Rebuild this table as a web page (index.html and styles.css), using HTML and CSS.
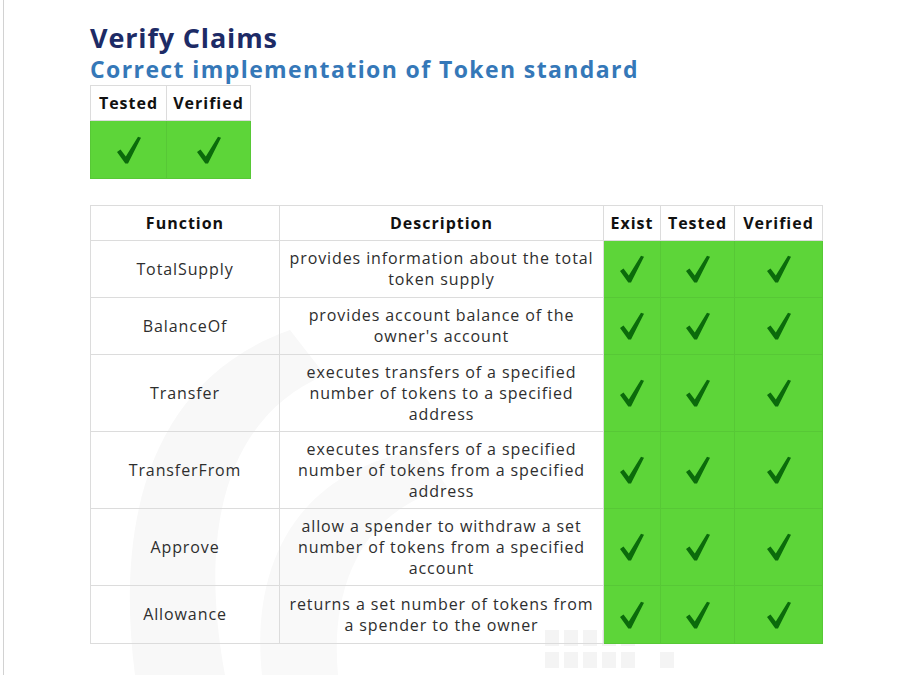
FILE: index.html
```html
<!DOCTYPE html>
<html>
<head>
<meta charset="utf-8">
<link rel="stylesheet" href="styles.css">
</head>
<body>
<div class="page">
  <svg class="watermark" width="913" height="675" viewBox="0 0 913 675">
    <path d="M135 675 C115 520 150 380 290 330 L325 375 C220 420 200 540 225 675 Z" fill="#f8f8f8"/>
    <path d="M262 675 C250 560 300 470 420 450 L448 488 C360 510 330 590 338 675 Z" fill="#f9f9f9"/>
    <g fill="#f4f4f4">
      <rect x="545" y="630" width="14" height="16"/><rect x="564" y="630" width="14" height="16"/><rect x="583" y="630" width="14" height="16"/><rect x="602" y="630" width="14" height="16"/><rect x="621" y="630" width="14" height="16"/>
      <rect x="545" y="652" width="14" height="16"/><rect x="564" y="652" width="14" height="16"/><rect x="583" y="652" width="14" height="16"/><rect x="602" y="652" width="14" height="16"/><rect x="621" y="652" width="14" height="16"/><rect x="660" y="652" width="14" height="16"/>
    </g>
  </svg>
  <div class="content">
    <h1 class="title">Verify Claims</h1>
    <h2 class="subtitle">Correct implementation of Token standard</h2>

    <table class="grid small">
      <colgroup><col class="c-st"><col class="c-sv"></colgroup>
      <tr class="head"><th>Tested</th><th>Verified</th></tr>
      <tr class="chk-row">
        <td class="ok"><svg class="chk" viewBox="0 0 24 28"><path d="M0 16 L3.5 13.5 L8.8 20.5 L21 0.8 L24 1.8 L11 27.5 L8.3 27.5 Z"/></svg></td>
        <td class="ok"><svg class="chk" viewBox="0 0 24 28"><path d="M0 16 L3.5 13.5 L8.8 20.5 L21 0.8 L24 1.8 L11 27.5 L8.3 27.5 Z"/></svg></td>
      </tr>
    </table>

    <table class="grid main">
      <colgroup><col class="c-fn"><col class="c-desc"><col class="c-ex"><col class="c-te"><col class="c-ve"></colgroup>
      <tr class="head"><th>Function</th><th>Description</th><th>Exist</th><th>Tested</th><th>Verified</th></tr>
      <tr class="r2"><td>TotalSupply</td><td>provides information about the total token supply</td>
        <td class="ok"><svg class="chk" viewBox="0 0 24 28"><path d="M0 16 L3.5 13.5 L8.8 20.5 L21 0.8 L24 1.8 L11 27.5 L8.3 27.5 Z"/></svg></td>
        <td class="ok"><svg class="chk" viewBox="0 0 24 28"><path d="M0 16 L3.5 13.5 L8.8 20.5 L21 0.8 L24 1.8 L11 27.5 L8.3 27.5 Z"/></svg></td>
        <td class="ok"><svg class="chk" viewBox="0 0 24 28"><path d="M0 16 L3.5 13.5 L8.8 20.5 L21 0.8 L24 1.8 L11 27.5 L8.3 27.5 Z"/></svg></td></tr>
      <tr class="r2"><td>BalanceOf</td><td>provides account balance of the owner's account</td>
        <td class="ok"><svg class="chk" viewBox="0 0 24 28"><path d="M0 16 L3.5 13.5 L8.8 20.5 L21 0.8 L24 1.8 L11 27.5 L8.3 27.5 Z"/></svg></td>
        <td class="ok"><svg class="chk" viewBox="0 0 24 28"><path d="M0 16 L3.5 13.5 L8.8 20.5 L21 0.8 L24 1.8 L11 27.5 L8.3 27.5 Z"/></svg></td>
        <td class="ok"><svg class="chk" viewBox="0 0 24 28"><path d="M0 16 L3.5 13.5 L8.8 20.5 L21 0.8 L24 1.8 L11 27.5 L8.3 27.5 Z"/></svg></td></tr>
      <tr class="r3"><td>Transfer</td><td>executes transfers of a specified number of tokens to a specified address</td>
        <td class="ok"><svg class="chk" viewBox="0 0 24 28"><path d="M0 16 L3.5 13.5 L8.8 20.5 L21 0.8 L24 1.8 L11 27.5 L8.3 27.5 Z"/></svg></td>
        <td class="ok"><svg class="chk" viewBox="0 0 24 28"><path d="M0 16 L3.5 13.5 L8.8 20.5 L21 0.8 L24 1.8 L11 27.5 L8.3 27.5 Z"/></svg></td>
        <td class="ok"><svg class="chk" viewBox="0 0 24 28"><path d="M0 16 L3.5 13.5 L8.8 20.5 L21 0.8 L24 1.8 L11 27.5 L8.3 27.5 Z"/></svg></td></tr>
      <tr class="r3"><td>TransferFrom</td><td>executes transfers of a specified number of tokens from a specified address</td>
        <td class="ok"><svg class="chk" viewBox="0 0 24 28"><path d="M0 16 L3.5 13.5 L8.8 20.5 L21 0.8 L24 1.8 L11 27.5 L8.3 27.5 Z"/></svg></td>
        <td class="ok"><svg class="chk" viewBox="0 0 24 28"><path d="M0 16 L3.5 13.5 L8.8 20.5 L21 0.8 L24 1.8 L11 27.5 L8.3 27.5 Z"/></svg></td>
        <td class="ok"><svg class="chk" viewBox="0 0 24 28"><path d="M0 16 L3.5 13.5 L8.8 20.5 L21 0.8 L24 1.8 L11 27.5 L8.3 27.5 Z"/></svg></td></tr>
      <tr class="r3"><td>Approve</td><td>allow a spender to withdraw a set number of tokens from a specified account</td>
        <td class="ok"><svg class="chk" viewBox="0 0 24 28"><path d="M0 16 L3.5 13.5 L8.8 20.5 L21 0.8 L24 1.8 L11 27.5 L8.3 27.5 Z"/></svg></td>
        <td class="ok"><svg class="chk" viewBox="0 0 24 28"><path d="M0 16 L3.5 13.5 L8.8 20.5 L21 0.8 L24 1.8 L11 27.5 L8.3 27.5 Z"/></svg></td>
        <td class="ok"><svg class="chk" viewBox="0 0 24 28"><path d="M0 16 L3.5 13.5 L8.8 20.5 L21 0.8 L24 1.8 L11 27.5 L8.3 27.5 Z"/></svg></td></tr>
      <tr class="r2 last"><td>Allowance</td><td>returns a set number of tokens from a spender to the owner</td>
        <td class="ok"><svg class="chk" viewBox="0 0 24 28"><path d="M0 16 L3.5 13.5 L8.8 20.5 L21 0.8 L24 1.8 L11 27.5 L8.3 27.5 Z"/></svg></td>
        <td class="ok"><svg class="chk" viewBox="0 0 24 28"><path d="M0 16 L3.5 13.5 L8.8 20.5 L21 0.8 L24 1.8 L11 27.5 L8.3 27.5 Z"/></svg></td>
        <td class="ok"><svg class="chk" viewBox="0 0 24 28"><path d="M0 16 L3.5 13.5 L8.8 20.5 L21 0.8 L24 1.8 L11 27.5 L8.3 27.5 Z"/></svg></td></tr>
    </table>
  </div>
</div>
</body>
</html>
```

FILE: styles.css
```css
html, body {
  margin: 0;
  padding: 0;
  background: #ffffff;
}
body {
  font-family: "Open Sans", "DejaVu Sans", sans-serif;
  color: #2e2e2e;
}
.page {
  position: relative;
  margin-left: 3px;
  border-left: 1px solid #d2d2d2;
  height: 675px;
  overflow: hidden;
  box-sizing: border-box;
}
.watermark {
  position: absolute;
  left: -4px;
  top: 0;
  z-index: 0;
}
.content {
  position: relative;
  z-index: 1;
  padding: 22px 0 0 86px;
}
.title {
  margin: 0;
  font-size: 27px;
  line-height: 32px;
  font-weight: 700;
  letter-spacing: 0.85px;
  color: #1d2b66;
}
.subtitle {
  margin: 0 0 1px 0;
  font-size: 23px;
  line-height: 30px;
  font-weight: 700;
  letter-spacing: 1.4px;
  color: #3578b8;
}
.grid {
  border-collapse: collapse;
  table-layout: fixed;
  background: transparent;
}
.grid th, .grid td {
  border: 1px solid #dcdcdc;
  text-align: center;
  vertical-align: middle;
  padding: 0 6px;
}
.grid th {
  font-size: 16px;
  font-weight: 700;
  letter-spacing: 1px;
  color: #111;
  height: 34px;
}
.grid td {
  font-size: 16px;
  line-height: 21px;
  letter-spacing: 0.9px;
}
.grid td.ok {
  background: #5dd539;
  border-color: #57c836;
  padding: 0;
}
.chk {
  display: block;
  margin: 0 auto;
  width: 24px;
  height: 28px;
  fill: #0b6b0b;
}
.small {
  width: 160px;
}
.small .chk-row td {
  height: 57px;
}
.c-st { width: 76px; }
.c-sv { width: 84px; }
.main {
  width: 732px;
  margin-top: 26px;
}
.c-fn { width: 189px; }
.c-desc { width: 324px; }
.c-ex { width: 57px; }
.c-te { width: 74px; }
.c-ve { width: 88px; }
.main tr.r2 td { height: 56px; }
.main tr.r3 td { height: 76px; }
.main tr.last td { height: 57px; }
```
